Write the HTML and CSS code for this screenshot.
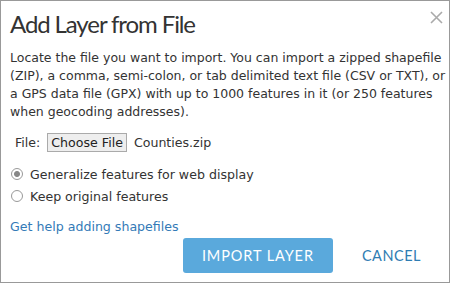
FILE: index.html
```html
<!DOCTYPE html>
<html lang="en">
<head>
    <meta charset="UTF-8">
    <title>Add Layer from File</title>
    <link rel="stylesheet" href="styles.css">
</head>
<body>
    <div class="dialog">
        <div class="dialog-header">
            <h2>Add Layer from File</h2>
            <svg class="close" width="13" height="13" viewBox="0 0 13 13">
                <path d="M1 1 L12 12 M12 1 L1 12" stroke="#aaa" stroke-width="1.6" fill="none"/>
            </svg>
        </div>

        <p class="intro">Locate the file you want to import. You can import a zipped shapefile<br>
            (ZIP), a comma, semi-colon, or tab delimited text file (CSV or TXT), or<br>
            a GPS data file (GPX) with up to 1000 features in it (or 250 features<br>
            when geocoding addresses).</p>

        <div class="file-row">
            <span>File:</span>
            <span class="choose-btn">Choose File</span>
            <span>Counties.zip</span>
        </div>

        <div class="options">
            <label class="radio"><span class="dot checked"></span>Generalize features for web display</label>
            <label class="radio"><span class="dot"></span>Keep original features</label>
        </div>

        <a href="#" class="help-link">Get help adding shapefiles</a>

        <div class="actions">
            <button class="btn-import">IMPORT LAYER</button>
            <button class="btn-cancel">CANCEL</button>
        </div>
    </div>
</body>
</html>
```

FILE: styles.css
```css
body {
    margin: 0;
    background-color: white;
    font-family: "DejaVu Sans", Verdana, sans-serif;
}

.dialog {
    width: 450px;
    height: 283px;
    box-sizing: border-box;
    border: 1px solid #999;
    background-color: white;
    padding: 0 2px 0 9px;
    color: #333;
}

.dialog-header {
    display: flex;
    justify-content: space-between;
    align-items: flex-start;
    height: 48px;
}

.dialog-header h2 {
    margin: 8px 0 0 0;
    font-family: Lato, sans-serif;
    font-weight: normal;
    font-size: 24px;
    letter-spacing: -1.1px;
    color: #333;
}

.close {
    margin-top: 10px;
    margin-right: 4px;
}

.intro {
    margin: 0;
    font-size: 12.5px;
    line-height: 18px;
    white-space: nowrap;
}

.file-row {
    display: flex;
    align-items: center;
    gap: 7px;
    margin: 12px 0 0 5px;
    font-size: 12.6px;
}

.choose-btn {
    border: 1px solid #aaa;
    background-color: #eee;
    padding: 1px 3px;
    color: #222;
}

.options {
    margin-top: 11px;
    font-size: 12.6px;
}

.radio {
    display: flex;
    align-items: center;
    gap: 7px;
    height: 22px;
    margin-left: 1px;
}

.dot {
    width: 12px;
    height: 12px;
    border: 1px solid #999;
    border-radius: 50%;
    box-sizing: border-box;
    display: inline-block;
}

.dot.checked {
    background: radial-gradient(circle, #888 0, #888 2.5px, white 3.5px);
}

.help-link {
    display: block;
    margin-top: 12px;
    font-size: 12.6px;
    color: #337ab7;
    text-decoration: none;
}

.actions {
    display: flex;
    justify-content: flex-end;
    align-items: center;
    margin-top: 4px;
    padding-right: 26px;
}

.btn-import {
    width: 150px;
    height: 35px;
    border: none;
    border-radius: 3px;
    background-color: #5aa9dc;
    color: white;
    font-family: Lato, sans-serif;
    font-size: 14.5px;
    letter-spacing: 0.9px;
}

.btn-cancel {
    margin-left: 29px;
    border: none;
    background: none;
    color: #2f7db3;
    font-family: Lato, sans-serif;
    font-size: 14.5px;
    letter-spacing: 0.5px;
    padding: 0;
}
```
